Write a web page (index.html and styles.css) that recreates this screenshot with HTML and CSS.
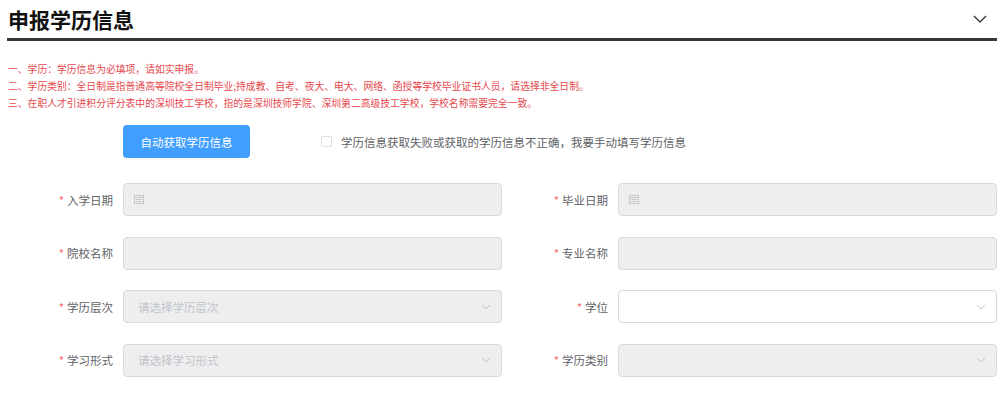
FILE: index.html
```html
<!DOCTYPE html>
<html lang="zh">
<head>
    <meta charset="UTF-8">
    <title>申报学历信息</title>
    <link rel="stylesheet" href="styles.css">
</head>
<body>
<div id="panel">
    <div class="head">
        <h2 class="title">申报学历信息</h2>
        <svg class="fold" width="14" height="8" viewBox="0 0 14 8"><path d="M1 1 L7 7 L13 1" fill="none" stroke="#333" stroke-width="1.3"/></svg>
    </div>
    <ul class="notes">
        <li>一、学历：学历信息为必填项，请如实申报。</li>
        <li>二、学历类别：全日制是指普通高等院校全日制毕业;持成教、自考、夜大、电大、网络、函授等学校毕业证书人员，请选择非全日制。</li>
        <li>三、在职人才引进积分评分表中的深圳技工学校，指的是深圳技师学院、深圳第二高级技工学校，学校名称需要完全一致。</li>
    </ul>
    <div class="actions">
        <button class="btn">自动获取学历信息</button>
        <label class="check"><span class="box"></span>学历信息获取失败或获取的学历信息不正确，我要手动填写学历信息</label>
    </div>
    <div class="form">
        <div class="field">
            <label class="lbl"><i>*</i>入学日期</label>
            <div class="input disabled">
                <svg class="cal" width="10" height="9" viewBox="0 0 10 9"><rect x="0.5" y="0.5" width="9" height="8" fill="none" stroke="#c8c8c8"/><path d="M0.5 2.5 H9.5 M2 4.5 H8 M2 6.5 H8" stroke="#c8c8c8"/></svg>
            </div>
        </div>
        <div class="field">
            <label class="lbl"><i>*</i>毕业日期</label>
            <div class="input disabled">
                <svg class="cal" width="10" height="9" viewBox="0 0 10 9"><rect x="0.5" y="0.5" width="9" height="8" fill="none" stroke="#c8c8c8"/><path d="M0.5 2.5 H9.5 M2 4.5 H8 M2 6.5 H8" stroke="#c8c8c8"/></svg>
            </div>
        </div>
        <div class="field">
            <label class="lbl"><i>*</i>院校名称</label>
            <div class="input disabled"></div>
        </div>
        <div class="field">
            <label class="lbl"><i>*</i>专业名称</label>
            <div class="input disabled"></div>
        </div>
        <div class="field">
            <label class="lbl"><i>*</i>学历层次</label>
            <div class="input select disabled">
                <span class="ph">请选择学历层次</span>
                <svg class="arrow" width="10" height="6" viewBox="0 0 10 6"><path d="M1 1 L5 5 L9 1" fill="none" stroke="#c0c4cc"/></svg>
            </div>
        </div>
        <div class="field">
            <label class="lbl"><i>*</i>学位</label>
            <div class="input select">
                <span class="ph"></span>
                <svg class="arrow" width="10" height="6" viewBox="0 0 10 6"><path d="M1 1 L5 5 L9 1" fill="none" stroke="#c0c4cc"/></svg>
            </div>
        </div>
        <div class="field">
            <label class="lbl"><i>*</i>学习形式</label>
            <div class="input select disabled">
                <span class="ph">请选择学习形式</span>
                <svg class="arrow" width="10" height="6" viewBox="0 0 10 6"><path d="M1 1 L5 5 L9 1" fill="none" stroke="#c0c4cc"/></svg>
            </div>
        </div>
        <div class="field">
            <label class="lbl"><i>*</i>学历类别</label>
            <div class="input select disabled">
                <span class="ph"></span>
                <svg class="arrow" width="10" height="6" viewBox="0 0 10 6"><path d="M1 1 L5 5 L9 1" fill="none" stroke="#c0c4cc"/></svg>
            </div>
        </div>
    </div>
</div>
</body>
</html>
```

FILE: styles.css
```css
*{
    margin: 0;
    padding: 0;
    box-sizing: border-box;
}
body{
    background: #ffffff;
    font-family: "Noto Sans CJK SC", "Liberation Sans", sans-serif;
    color: #606266;
}
li{
    list-style: none;
}
#panel{
    padding: 0 3px 0 7px;
}
.head{
    display: flex;
    justify-content: space-between;
    align-items: center;
    padding: 4px 0 4px 1px;
    border-bottom: 3px solid #363636;
}
.title{
    font-size: 21px;
    line-height: 30px;
    font-weight: bold;
    color: #111111;
}
.fold{
    margin-right: 10px;
}
.notes{
    margin-top: 20px;
    padding-left: 1px;
    font-size: 9.8px;
    line-height: 17px;
    color: #e5484d;
}
.actions{
    display: flex;
    align-items: center;
    margin-top: 13px;
    padding-left: 116px;
}
.btn{
    width: 127px;
    height: 33px;
    border: 0;
    border-radius: 4px;
    background: #409eff;
    color: #ffffff;
    font-family: inherit;
    font-size: 11.5px;
}
.check{
    display: flex;
    align-items: center;
    margin-left: 71px;
    font-size: 11.5px;
    color: #606266;
}
.box{
    width: 11px;
    height: 11px;
    border: 1px solid #dcdfe6;
    border-radius: 2px;
    margin-right: 9px;
}
.form{
    display: grid;
    grid-template-columns: 495px 495px;
    row-gap: 20.5px;
    margin-top: 25px;
}
.field{
    display: flex;
    align-items: center;
    height: 33px;
}
.lbl{
    width: 116px;
    padding-right: 10px;
    text-align: right;
    font-size: 11.5px;
    color: #606266;
}
.lbl i{
    font-style: normal;
    color: #f56c6c;
    margin-right: 3px;
}
.input{
    display: flex;
    align-items: center;
    width: 379px;
    height: 33px;
    padding: 0 10px;
    border: 1px solid #d9d9d9;
    border-radius: 4px;
    background: #ffffff;
}
.input.disabled{
    background: #eeeeee;
}
.select{
    justify-content: space-between;
    padding: 0 10px 0 14px;
}
.ph{
    font-size: 11.5px;
    color: #c0c4cc;
}
```
